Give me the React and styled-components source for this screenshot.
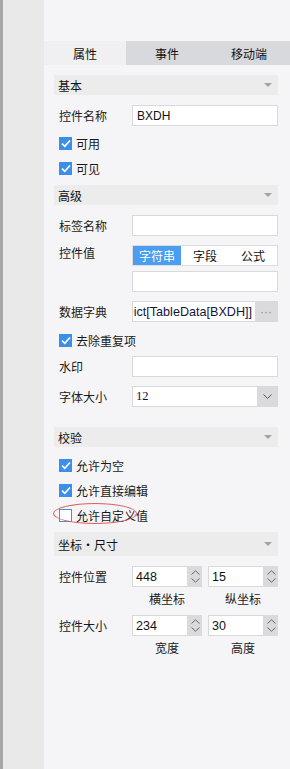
import React from "react";
import styled, { createGlobalStyle } from "styled-components";

const Global = createGlobalStyle`
  html, body { margin: 0; padding: 0; }
  body { font-family: "Liberation Sans", "Noto Sans CJK SC", sans-serif; font-size: 12px; color: #1a1a1a; }
  * { box-sizing: border-box; }
`;

const Page = styled.div`
  display: flex;
  width: 290px;
  height: 769px;
  overflow: hidden;
`;

const LeftStrip = styled.div`
  width: 44px;
  flex: none;
  background: #e9e9e9;
  border-left: 3px solid #a6a6a6;
`;

const Panel = styled.div`
  flex: 1;
  background: #f5f5f7;
  padding-top: 41px;
  display: flex;
  flex-direction: column;
`;

const Tabs = styled.div`
  display: grid;
  grid-template-columns: 82px 82px 82px;
  height: 24px;
`;

const Tab = styled.div`
  display: flex;
  align-items: center;
  justify-content: center;
  background: ${(p) => (p.$active ? "#f0f0f2" : "#d8d9dc")};
  color: #111;
  font-size: 12px;
`;

const Content = styled.div`
  position: relative;
  padding: 0 12px 0 10px;
  display: flex;
  flex-direction: column;
`;

const SectionHeader = styled.div`
  height: ${(p) => p.$h || 20}px;
  margin-top: ${(p) => p.$mt || 0}px;
  background: #ececec;
  display: flex;
  align-items: center;
  justify-content: space-between;
  padding: 0 6px 0 4px;
  color: #111;
`;

const Tri = styled.span`
  width: 0;
  height: 0;
  border-left: 4px solid transparent;
  border-right: 4px solid transparent;
  border-top: 4px solid #a3a3a3;
`;

const FieldRow = styled.div`
  display: flex;
  align-items: ${(p) => (p.$top ? "flex-start" : "center")};
  margin-top: ${(p) => p.$mt || 0}px;
  padding-left: 5px;
`;

const Label = styled.div`
  width: 73px;
  flex: none;
  line-height: ${(p) => (p.$top ? "19px" : "normal")};
`;

const Control = styled.div`
  width: 146px;
  flex: none;
  display: flex;
  flex-direction: column;
  gap: 5px;
`;

const TextBox = styled.div`
  height: 21px;
  background: #fff;
  border: 1px solid #d9d9d9;
  display: flex;
  align-items: center;
  padding-left: 4px;
  color: #111;
  overflow: hidden;
  white-space: nowrap;
`;

const CheckRow = styled.div`
  height: 25px;
  margin-top: ${(p) => p.$mt || 0}px;
  display: flex;
  align-items: center;
  gap: 4px;
  padding-left: 5px;
`;

const Box = styled.span`
  width: 13px;
  height: 13px;
  flex: none;
  display: flex;
  align-items: center;
  justify-content: center;
  background: ${(p) => (p.$on ? "#3c8fe9" : "#fff")};
  border: 1px solid ${(p) => (p.$on ? "#3c8fe9" : "#4a8fd8")};
`;

const Segmented = styled.div`
  height: 21px;
  display: grid;
  grid-template-columns: repeat(3, 1fr);
  background: #fff;
  border: 1px solid #dcdcdc;
`;

const Seg = styled.div`
  display: flex;
  align-items: center;
  justify-content: center;
  background: ${(p) => (p.$active ? "#4a9df0" : "transparent")};
  color: ${(p) => (p.$active ? "#fff" : "#111")};
`;

const Joined = styled.div`
  height: 21px;
  display: flex;
  border: 1px solid #d9d9d9;
  background: #fff;
`;

const JoinedText = styled.div`
  flex: 1;
  min-width: 0;
  overflow: hidden;
  display: flex;
  justify-content: flex-end;
  align-items: center;
  white-space: nowrap;
  padding-right: 3px;
  color: #14143c;
  font-size: 12.6px;
`;

const SelectText = styled.div`
  flex: 1;
  display: flex;
  align-items: center;
  padding-left: 3px;
  color: #101040;
  font-family: "Liberation Serif", serif;
  font-size: 12.5px;
`;

const SideBtn = styled.div`
  width: ${(p) => p.$w}px;
  flex: none;
  background: #dadadc;
  display: flex;
  align-items: center;
  justify-content: center;
  color: #8a8a8a;
`;

const SpinPair = styled.div`
  display: flex;
  gap: 6px;
`;

const Spin = styled.div`
  display: flex;
  height: 21px;
  width: 70px;
`;

const SpinInput = styled.div`
  width: 56px;
  background: #fff;
  border: 1px solid #d9d9d9;
  display: flex;
  align-items: center;
  padding-left: 3px;
  color: #111;
  font-size: 12.5px;
`;

const SpinBtns = styled.div`
  width: 14px;
  background: #dadadc;
  display: flex;
  flex-direction: column;
  align-items: center;
  justify-content: center;
  gap: 3px;
`;

const Captions = styled.div`
  display: flex;
  gap: 6px;
  height: 22px;
  margin-left: 78px;
`;

const Caption = styled.div`
  width: 70px;
  display: flex;
  align-items: center;
  justify-content: center;
`;

const Ellipse = styled.div`
  position: absolute;
  left: 9px;
  top: 438px;
  width: 84px;
  height: 21px;
  border: 1px solid #e35d5d;
  border-radius: 50%;
  pointer-events: none;
`;

const Check = () => (
  <svg width="10" height="9" viewBox="0 0 10 9">
    <path d="M1 4.6 L3.8 7.3 L9 1.5" stroke="#fff" strokeWidth="1.7" fill="none" />
  </svg>
);

const Chev = ({ up }) => (
  <svg width="9" height="5" viewBox="0 0 9 5">
    <path d={up ? "M0.5 4.5 L4.5 0.8 L8.5 4.5" : "M0.5 0.5 L4.5 4.2 L8.5 0.5"} stroke="#666" strokeWidth="1" fill="none" />
  </svg>
);

const CheckItem = ({ on, children, mt }) => (
  <CheckRow $mt={mt}>
    <Box $on={on}>{on && <Check />}</Box>
    <span>{children}</span>
  </CheckRow>
);

const Spinner = ({ value }) => (
  <Spin>
    <SpinInput>{value}</SpinInput>
    <SpinBtns>
      <Chev up />
      <Chev />
    </SpinBtns>
  </Spin>
);

export default function App() {
  return (
    <Page>
      <Global />
      <LeftStrip />
      <Panel>
        <Tabs>
          <Tab $active>属性</Tab>
          <Tab>事件</Tab>
          <Tab>移动端</Tab>
        </Tabs>
        <Content>
          <SectionHeader $mt={10}>
            <span>基本</span>
            <Tri />
          </SectionHeader>
          <FieldRow $mt={10}>
            <Label>控件名称</Label>
            <Control>
              <TextBox>BXDH</TextBox>
            </Control>
          </FieldRow>
          <CheckItem on mt={5}>可用</CheckItem>
          <CheckItem on>可见</CheckItem>
          <SectionHeader $mt={4}>
            <span>高级</span>
            <Tri />
          </SectionHeader>
          <FieldRow $mt={10}>
            <Label>标签名称</Label>
            <Control>
              <TextBox />
            </Control>
          </FieldRow>
          <FieldRow $mt={9} $top>
            <Label $top>控件值</Label>
            <Control>
              <Segmented>
                <Seg $active>字符串</Seg>
                <Seg>字段</Seg>
                <Seg>公式</Seg>
              </Segmented>
              <TextBox />
            </Control>
          </FieldRow>
          <FieldRow $mt={9}>
            <Label>数据字典</Label>
            <Control>
              <Joined>
                <JoinedText>Dict[TableData[BXDH]]</JoinedText>
                <SideBtn $w={22}>···</SideBtn>
              </Joined>
            </Control>
          </FieldRow>
          <CheckItem on mt={6}>去除重复项</CheckItem>
          <FieldRow $mt={3}>
            <Label>水印</Label>
            <Control>
              <TextBox />
            </Control>
          </FieldRow>
          <FieldRow $mt={9}>
            <Label>字体大小</Label>
            <Control>
              <Joined>
                <SelectText>12</SelectText>
                <SideBtn $w={20}>
                  <svg width="9" height="5" viewBox="0 0 9 5">
                    <path d="M0.5 0.5 L4.5 4.5 L8.5 0.5" stroke="#555" strokeWidth="1" fill="none" />
                  </svg>
                </SideBtn>
              </Joined>
            </Control>
          </FieldRow>
          <SectionHeader $mt={20}>
            <span>校验</span>
            <Tri />
          </SectionHeader>
          <CheckItem on mt={6}>允许为空</CheckItem>
          <CheckItem on>允许直接编辑</CheckItem>
          <CheckItem>允许自定义值</CheckItem>
          <SectionHeader $mt={4} $h={24}>
            <span>坐标・尺寸</span>
            <Tri />
          </SectionHeader>
          <FieldRow $mt={10}>
            <Label>控件位置</Label>
            <SpinPair>
              <Spinner value="448" />
              <Spinner value="15" />
            </SpinPair>
          </FieldRow>
          <Captions>
            <Caption>横坐标</Caption>
            <Caption>纵坐标</Caption>
          </Captions>
          <FieldRow $mt={6}>
            <Label>控件大小</Label>
            <SpinPair>
              <Spinner value="234" />
              <Spinner value="30" />
            </SpinPair>
          </FieldRow>
          <Captions>
            <Caption>宽度</Caption>
            <Caption>高度</Caption>
          </Captions>
          <Ellipse />
        </Content>
      </Panel>
    </Page>
  );
}
